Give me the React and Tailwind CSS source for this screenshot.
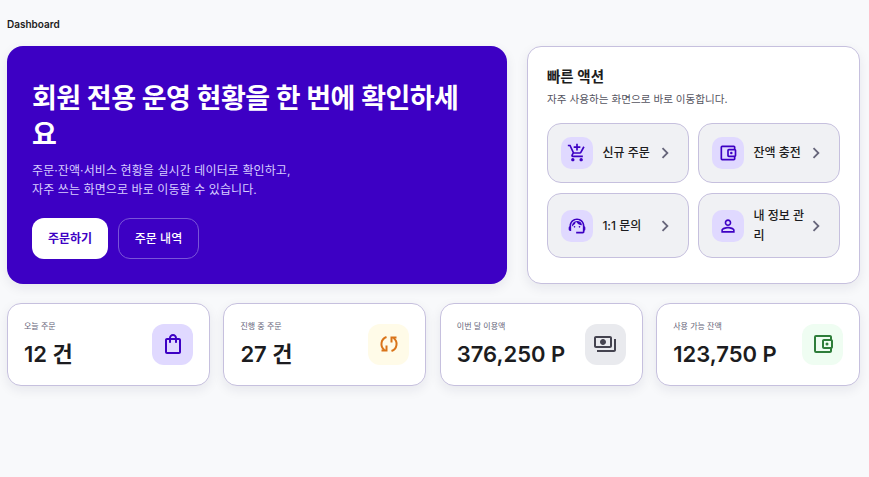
import React from "react";
import {
  MdOutlineAddShoppingCart,
  MdOutlineAccountBalanceWallet,
  MdOutlineSupportAgent,
  MdOutlinePersonOutline,
  MdOutlineShoppingBag,
  MdOutlinePayments,
  MdChevronRight,
} from "react-icons/md";

// two arcs with corner arrow heads, no package has this exact one
function SyncIcon({ size = 24 }) {
  return (
    <svg width={size} height={size} viewBox="0 0 24 24" fill="none" stroke="currentColor" strokeWidth="2">
      <path d="M14.5 19A7.4 7.4 0 0 0 16.5 6" />
      <path d="M19.5 5.5H14.5V10.5" />
      <path d="M9.5 5A7.4 7.4 0 0 0 7.5 18" />
      <path d="M4.5 18.5H9.5V13.5" />
    </svg>
  );
}

const actions = [
  { label: "신규 주문", icon: MdOutlineAddShoppingCart },
  { label: "잔액 충전", icon: MdOutlineAccountBalanceWallet },
  { label: "1:1 문의", icon: MdOutlineSupportAgent },
  { label: "내 정보 관리", icon: MdOutlinePersonOutline },
];

const stats = [
  { label: "오늘 주문", value: "12 건", icon: MdOutlineShoppingBag, box: "bg-[#e0d9ff] text-[#3d00c4]" },
  { label: "진행 중 주문", value: "27 건", icon: SyncIcon, box: "bg-[#fffbe8] text-[#d9741a]" },
  { label: "이번 달 이용액", value: "376,250 P", icon: MdOutlinePayments, box: "bg-[#e9eaee] text-[#44434f]" },
  { label: "사용 가능 잔액", value: "123,750 P", icon: MdOutlineAccountBalanceWallet, box: "bg-[#effdf2] text-[#2e7d3a]" },
];

function ActionCard({ label, icon: Icon }) {
  return (
    <div className="flex min-h-[60px] items-center gap-[9.4px] rounded-[14px] border border-[#c6c0de] bg-[#f0f1f4] py-[11.5px] pr-[12px] pl-[13px]">
      <div className="flex h-[32px] w-[32px] shrink-0 items-center justify-center rounded-[10px] bg-[#e0d9ff] text-[#3d00c4]">
        <Icon size={20} />
      </div>
      <span className="min-w-0 flex-1 text-[12px] leading-[20px] font-medium text-[#1c1c20]">{label}</span>
      <MdChevronRight size={22} className="-ml-[9.4px] shrink-0 text-[#66657a]" />
    </div>
  );
}

function StatCard({ label, value, icon: Icon, box }) {
  return (
    <div className="flex items-center justify-between rounded-[14px] border border-[#c6c0de] bg-white pt-[16px] pr-[16px] pb-[17px] pl-[16px] shadow-[0_4px_12px_rgba(30,30,60,0.08)]">
      <div>
        <p className="text-[8px] leading-[12px] text-[#66657a]">{label}</p>
        <p className="mt-[8px] text-[22px] leading-[28px] font-semibold text-[#1c1c20]">{value}</p>
      </div>
      <div className={`flex h-[41px] w-[41px] items-center justify-center rounded-[12px] ${box}`}>
        <Icon size={24} />
      </div>
    </div>
  );
}

export default function App() {
  return (
    <div className="min-h-[477px] bg-[#f8f9fb] pt-[18px] pr-[9px] pl-[7px] font-['Inter','Noto_Sans_CJK_KR',sans-serif]">
      <h1 className="text-[10px] leading-[13px] font-semibold text-[#1c1c20]">Dashboard</h1>
      <div className="mt-[15px] grid grid-cols-[500px_1fr] gap-[20px]">
        <section className="rounded-[16px] bg-[#3d00c4] px-[25px] pt-[35px] pb-[25px] shadow-[0_4px_12px_rgba(30,30,60,0.08)]">
          <h2 className="text-[27px] leading-[36px] font-semibold tracking-[-0.54px] text-white">회원 전용 운영 현황을 한 번에 확인하세요</h2>
          <p className="mt-[8px] text-[12px] leading-[19px] tracking-[0.1px] text-[#d8ceff]">
            주문·잔액·서비스 현황을 실시간 데이터로 확인하고,
            <br />
            자주 쓰는 화면으로 바로 이동할 수 있습니다.
          </p>
          <div className="mt-[19px] flex gap-[10px]">
            <button className="h-[41px] w-[76px] rounded-[12px] bg-white text-[12px] font-semibold text-[#3d00c4]">주문하기</button>
            <button className="h-[41px] w-[81px] rounded-[12px] border border-[#7a55d8] text-[12px] font-medium text-white">주문 내역</button>
          </div>
        </section>
        <section className="rounded-[14px] border border-[#c6c0de] bg-white px-[19px] pt-[20px] pb-[25px] shadow-[0_4px_12px_rgba(30,30,60,0.08)]">
          <h2 className="text-[14.5px] leading-[20px] font-semibold text-[#1c1c20]">빠른 액션</h2>
          <p className="mt-[5px] text-[10.6px] leading-[16px] text-[#55545f]">자주 사용하는 화면으로 바로 이동합니다.</p>
          <div className="mt-[15px] grid grid-cols-2 gap-x-[9px] gap-y-[10px]">
            {actions.map((a) => (
              <ActionCard key={a.label} {...a} />
            ))}
          </div>
        </section>
      </div>
      <div className="mt-[19px] grid grid-cols-[203px_203px_203px_1fr] gap-[13.4px]">
        {stats.map((s) => (
          <StatCard key={s.label} {...s} />
        ))}
      </div>
    </div>
  );
}
